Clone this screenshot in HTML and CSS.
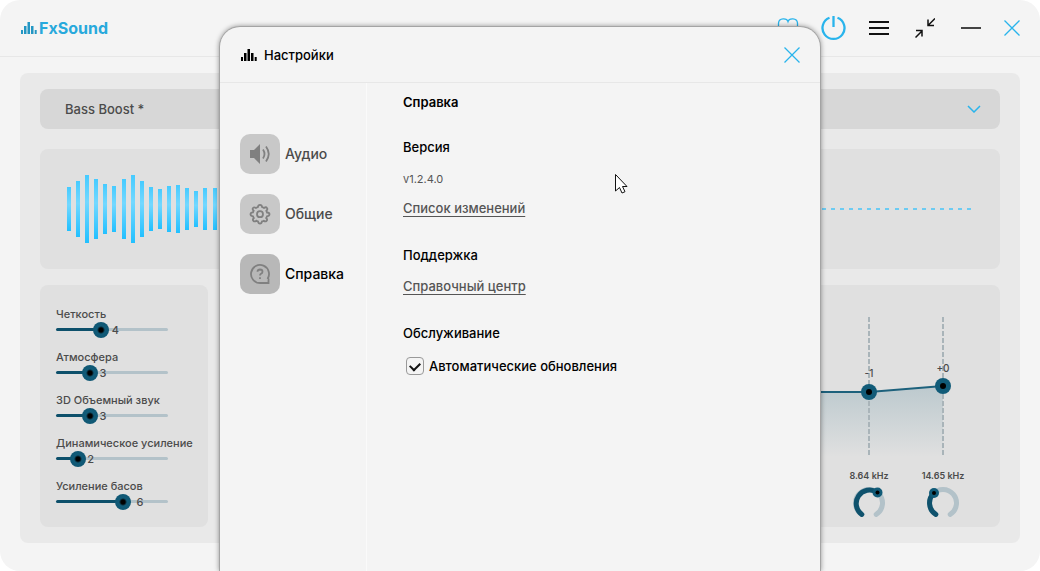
FILE: index.html
```html
<!DOCTYPE html>
<html lang="ru">
<head>
<meta charset="utf-8">
<title>FxSound</title>
<link rel="stylesheet" href="styles.css">
</head>
<body>
<div class="app">
  <header class="topbar">
    <div class="brand">
      <svg class="brand-mark" width="16" height="12" viewBox="0 0 16 12" aria-hidden="true"><path d="M0 8h2v4H0zM3 4h2.500v8H3zM6.500 0h2.500v12H6.500zM10 4h2.500v8H10zM13.700 8h2v4h-2z"/></svg>
      <span class="brand-name">FxSound</span>
    </div>
    <div class="tools">
      <button class="tool accent" aria-label="Donate"><svg width="24" height="24" viewBox="0 0 24 24"><path d="M13 5.500C12 2 4 1.500 3.500 7V10C4 14 9 18 13 21C17 18 22 14 22.500 10V7C22 1.500 14 2 13 5.500Z"/></svg></button>
      <button class="tool accent power" aria-label="Power"><svg width="26" height="26" viewBox="0 0 26 26"><path d="M9.500 2.700A11 11 0 1 0 17.500 2.700M13.500 1V12"/></svg></button>
      <button class="tool menu" aria-label="Menu"><svg width="20" height="16" viewBox="0 0 20 16"><path d="M0 2H20M0 8H20M0 14H20"/></svg></button>
      <button class="tool" aria-label="Compact view"><svg width="20" height="20" viewBox="0 0 20 20"><path d="M20 0.500L13.500 7M13 1.500V7.500H19M0.500 19.500L7 13M1 12.500H7V18.500"/></svg></button>
      <button class="tool minimize" aria-label="Minimize"><svg width="20" height="4" viewBox="0 0 20 4"><path d="M0 2H20"/></svg></button>
      <button class="tool accent close" aria-label="Close window"><svg width="16" height="16" viewBox="0 0 16 16"><path d="M0.500 0.500L15.500 15.500M15.500 0.500L0.500 15.500"/></svg></button>
    </div>
  </header>

  <main class="board">
    <button class="preset">
      <span>Bass Boost *</span>
      <svg width="14" height="8" viewBox="0 0 14 8" aria-hidden="true"><path d="M1 1L7 7L13 1"/></svg>
    </button>

    <section class="panel wave" id="wave" aria-label="Visualizer"></section>

    <div class="lower">
      <section class="panel effects" id="effects"></section>
      <section class="panel equalizer">
        <svg class="curve" width="340" height="140" viewBox="0 0 340 140" aria-hidden="true">
          <defs><linearGradient id="fade" x1="0" y1="0" x2="0" y2="1"><stop offset="0" stop-color="#0f5a76" stop-opacity=".17"/><stop offset="1" stop-color="#0f5a76" stop-opacity="0"/></linearGradient></defs>
          <path d="M0 75H209L283 69V140H0Z" fill="url(#fade)"/>
          <path class="guide" d="M209 0V138M283 0V138"/>
          <path class="line" d="M0 75H209L283 69"/>
          <circle class="node" cx="209" cy="75" r="8"/><circle cx="209" cy="75" r="3"/>
          <circle class="node" cx="283" cy="69" r="8"/><circle cx="283" cy="69" r="3"/>
          <text x="209" y="60">-1</text><text x="283" y="55">+0</text>
        </svg>
        <div class="bands">
          <div class="band"><span>8.64 kHz</span>
            <svg width="34" height="34" viewBox="0 0 34 34" aria-hidden="true"><path class="ring" d="M24.200 28.400A13.500 13.500 0 1 0 9.800 28.400"/><path class="ring on" d="M9.800 28.400A13.500 13.500 0 0 1 25 6.100"/><circle class="knob" cx="25.500" cy="6.500" r="5"/><circle cx="25.500" cy="6.500" r="2"/></svg>
          </div>
          <div class="band"><span>14.65 kHz</span>
            <svg width="34" height="34" viewBox="0 0 34 34" aria-hidden="true"><path class="ring" d="M24.200 28.400A13.500 13.500 0 1 0 9.800 28.400"/><path class="ring on" d="M9.800 28.400A13.500 13.500 0 0 1 8 7"/><circle class="knob" cx="8" cy="7" r="5"/><circle cx="8" cy="7" r="2"/></svg>
          </div>
        </div>
      </section>
    </div>
  </main>

  <section class="dialog" role="dialog" aria-labelledby="dialog-title">
    <header class="dialog-head">
      <svg width="16" height="12" viewBox="0 0 16 12" aria-hidden="true"><path d="M0 8h2v4H0zM3 4h2.500v8H3zM6.500 0h2.500v12H6.500zM10 4h2.500v8H10zM13.700 8h2v4h-2z"/></svg>
      <h1 id="dialog-title">Настройки</h1>
      <button class="tool accent close" aria-label="Close"><svg width="16" height="16" viewBox="0 0 16 16"><path d="M0.500 0.500L15.500 15.500M15.500 0.500L0.500 15.500"/></svg></button>
    </header>
    <div class="dialog-body">
      <nav class="tabs">
        <button class="tab">
          <span class="tile"><svg width="22" height="22" viewBox="0 0 22 22"><path class="solid" d="M1 7H5L11 1V21L5 15H1Z"/><path d="M14 6.500Q17 11 14 15.500M17 3.500Q22.500 11 17 18.500"/></svg></span>
          <span>Аудио</span>
        </button>
        <button class="tab">
          <span class="tile"><svg width="22" height="22" viewBox="0 0 22 22"><path d="M11 1.800Q12.800 1.800 13.200 4.200Q14.300 4.500 15 5Q17 3.600 18 5Q19 6.200 17.300 7.800Q17.700 8.500 18 9.500Q20.500 9.500 20.500 11.300Q20.500 13 18 13.300Q17.800 14.200 17.200 15Q18.800 16.600 17.500 18Q16.200 19 14.700 17.700Q13.700 18.200 13 18.400Q12.700 20.600 11 20.600Q9.300 20.600 9 18.400Q8 18.200 7.300 17.700Q5.600 19 4.500 18Q3.200 16.600 4.800 15Q4.300 14.200 4 13.300Q1.500 13 1.500 11.300Q1.500 9.500 4 9.300Q4.200 8.500 4.700 7.800Q3 6.200 4 5Q5.200 3.700 7 5Q7.800 4.500 8.800 4.200Q9.200 1.800 11 1.800Z"/><circle cx="11" cy="11.200" r="3"/></svg></span>
          <span>Общие</span>
        </button>
        <button class="tab current" aria-current="page">
          <span class="tile"><svg width="22" height="22" viewBox="0 0 22 22"><path d="M18.500 16A9 9 0 1 0 11 20H19.500V15.500M8.500 8.800Q8.600 6.500 11 6.500Q13.500 6.600 13.500 8.700Q13.500 10 12 10.800Q11 11.400 11 12.500M11 14.200V16"/></svg></span>
          <span>Справка</span>
        </button>
      </nav>
      <div class="page">
        <h2>Справка</h2>
        <section class="group">
          <h3>Версия</h3>
          <p class="version">v1.2.4.0</p>
          <a href="#changelog">Список изменений</a>
        </section>
        <section class="group">
          <h3>Поддержка</h3>
          <a href="#help">Справочный центр</a>
        </section>
        <section class="group">
          <h3>Обслуживание</h3>
          <label class="check"><input type="checkbox" checked><span>Автоматические обновления</span></label>
        </section>
      </div>
    </div>
  </section>

  <svg class="cursor" width="13" height="20" viewBox="0 0 13 20" aria-hidden="true"><path d="M0.500 0.500V17L4.500 13.500L7 19L10 17.700L7.500 12.500H12Z"/></svg>
</div>
<script src="app.js"></script>
</body>
</html>
```
FILE: styles.css
```css
* { box-sizing: border-box; }

body {
  margin: 0;
  background: #fff;
  color: #000;
  font: 500 13px/20px Inter, "Noto Sans", sans-serif;
}

h1, h2, h3, p { margin: 0; font-size: 13px; font-weight: 500; }

button {
  padding: 0;
  border: 0;
  background: none;
  color: inherit;
  font: inherit;
}

svg { display: block; flex: none; }

.app {
  position: relative;
  display: flex;
  flex-direction: column;
  min-height: 100vh;
  overflow: hidden;
  border-radius: 20px;
  background: #f4f4f4;
}

.topbar {
  display: flex;
  align-items: center;
  justify-content: space-between;
  height: 57px;
  padding: 0 18px 0 21px;
  border-bottom: 1px solid #e7e7e7;
}

.brand { display: flex; align-items: center; gap: 2px; color: #28a9dc; }
.brand-mark { fill: #2396c3; }
.brand-name { font-size: 16px; font-weight: 700; }

.tools { display: flex; align-items: center; gap: 16px; }

.tool {
  display: flex;
  align-items: center;
  justify-content: center;
  width: 30px;
  height: 30px;
}
.tool svg { fill: none; stroke: #111; stroke-width: 1.5; }
.tool.accent svg { stroke: #29b4ec; stroke-width: 1.3; }
.tool.power svg { stroke-width: 2.3; }
.tool.menu svg, .tool.minimize svg { stroke-width: 2; }
.tool.minimize svg { stroke: #444; }
.tool.close { width: 20px; }

.board {
  display: flex;
  flex-direction: column;
  margin: 16px 20px 28px;
  padding: 16px 20px;
  border-radius: 8px;
  background: #e9e9e9;
}

.preset {
  display: flex;
  align-items: center;
  justify-content: space-between;
  height: 40px;
  margin-bottom: 20px;
  padding: 0 19px 0 25px;
  border-radius: 8px;
  background: #d7d7d7;
  color: #4b4b4b;
}
.preset svg { fill: none; stroke: #29b4ec; stroke-width: 1.5; }

.panel { border-radius: 8px; background: #e0e0e0; }

.wave {
  display: flex;
  align-items: center;
  justify-content: space-between;
  height: 120px;
  margin-bottom: 16px;
  padding: 0 28px 0 27px;
}
.bar { width: 4px; background: linear-gradient(#46cbff, #73d8ff 40%, #22c0ff); }
.bar.quiet { background: #6ccbf2; }

.lower { display: flex; gap: 16px; }

.effects {
  display: flex;
  flex-direction: column;
  gap: 11px;
  width: 168px;
  padding: 21px 16px 17px;
  color: #4b4b4b;
  font-size: 11px;
  line-height: 16px;
}
.effect label { display: block; white-space: nowrap; }

.slider {
  position: relative;
  width: 112px;
  height: 16px;
}
.slider::before {
  content: "";
  position: absolute;
  inset: 6px 0 7px;
  border-radius: 2px;
  background: linear-gradient(to right, #0d506b var(--fill), #b3c2c9 0);
}
.slider input {
  position: relative;
  display: block;
  width: 128px;
  height: 16px;
  margin: 0 -8px;
  appearance: none;
  background: none;
}
.slider input::-webkit-slider-thumb {
  appearance: none;
  width: 16px;
  height: 16px;
  border-radius: 50%;
  background: radial-gradient(circle, #000 2px, #115b78 4px, #0e5470);
}
.slider output {
  position: absolute;
  top: 0;
  left: calc(var(--fill) * 1.1 + 10px);
  transform: translateX(-50%);
}

.equalizer {
  display: flex;
  flex: 1;
  flex-direction: column;
  align-items: flex-end;
  padding-top: 32px;
}
.curve text {
  fill: #4b4b4b;
  font-size: 10px;
  text-anchor: middle;
}
.guide { stroke: #a9b4b9; stroke-width: 2; stroke-dasharray: 5 2; }
.line { fill: none; stroke: #1d617c; stroke-width: 2; }
.node, .knob { fill: #115b78; }

.bands { display: flex; margin-top: 11px; padding-right: 20px; }
.band {
  display: flex;
  flex-direction: column;
  align-items: center;
  width: 74px;
  color: #4b4b4b;
  font-size: 9px;
  font-weight: 600;
  line-height: 16px;
}
.band svg { margin-top: 2px; }
.ring { fill: none; stroke: #b3c2c9; stroke-width: 5; stroke-linecap: round; }
.ring.on { stroke: #0f526d; }

.dialog {
  position: absolute;
  top: 26px;
  bottom: 0;
  left: 50%;
  width: 602px;
  max-width: 100%;
  transform: translateX(-50%);
  border: 1px solid #a4a4a4;
  border-bottom: 0;
  border-radius: 21px 21px 0 0;
  background: #f4f4f4;
  box-shadow: 0 0 5px rgba(0, 0, 0, .4);
}
.dialog-head {
  display: flex;
  align-items: center;
  gap: 7px;
  height: 56px;
  padding: 0 18px 0 21px;
  border-bottom: 1px solid #e7e7e7;
}
.dialog-head .tool { margin-left: auto; }

.dialog-body { display: flex; height: calc(100% - 56px); }

.tabs {
  display: flex;
  flex-direction: column;
  gap: 20px;
  width: 147px;
  padding: 51px 0 0 20px;
  border-right: 1px solid #fafafa;
}
.tab {
  display: flex;
  align-items: center;
  gap: 5px;
  color: #4b4b4b;
  font-size: 14px;
}
.tab.current { color: #000; }
.tile {
  display: flex;
  align-items: center;
  justify-content: center;
  width: 40px;
  height: 40px;
  border-radius: 10px;
  background: #c8c8c8;
}
.tile svg { fill: none; stroke: #808080; stroke-width: 1.8; }
.tile .solid { fill: #808080; stroke: none; }
.current .tile { background: #b8b8b8; }

.page { flex: 1; padding: 9px 36px; }
.page h2 { font-weight: 600; }
.group { margin-top: 25px; }
.group + .group { margin-top: 27px; }
.page a {
  display: table;
  margin-top: 11px;
  color: #555;
  text-decoration: underline;
  text-underline-offset: 3px;
}
.page .version { margin-top: 12px; color: #555; font-size: 11px; font-weight: 400; }
.page .version + a { margin-top: 9px; }

.check { display: flex; align-items: center; gap: 5px; margin: 13px 0 0 3px; }
.check input {
  display: grid;
  place-items: center;
  width: 18px;
  height: 18px;
  margin: 0;
  appearance: none;
  border: 1px solid #999;
  border-radius: 4px;
}
.check input:checked::before {
  content: "";
  width: 8px;
  height: 5px;
  margin-bottom: 2px;
  border: solid #111;
  border-width: 0 0 2px 2px;
  transform: rotate(-45deg);
}

.cursor { position: absolute; top: 174px; left: 615px; fill: #fff; stroke: #111; }
```
FILE: app.js
```js
const levels = [44, 56, 68, 60, 50, 46, 60, 68, 56, 44, 40, 46, 48, 42, 36, 42, 42];
const wave = document.getElementById("wave");
for (let i = 0; i < 100; i++) {
  const bar = document.createElement("span");
  bar.className = i < levels.length ? "bar" : "bar quiet";
  bar.style.height = (levels[i] || 2) + "px";
  wave.append(bar);
}

const effects = [
  ["Четкость", 4],
  ["Атмосфера", 3],
  ["3D Объемный звук", 3],
  ["Динамическое усиление", 2],
  ["Усиление басов", 6]
];
document.getElementById("effects").innerHTML = effects.map(([name, value], i) => `
  <div class="effect">
    <label for="effect-${i}">${name}</label>
    <div class="slider" style="--fill: ${value * 10}%">
      <input id="effect-${i}" type="range" min="0" max="10" value="${value}">
      <output for="effect-${i}">${value}</output>
    </div>
  </div>`).join("");
```
